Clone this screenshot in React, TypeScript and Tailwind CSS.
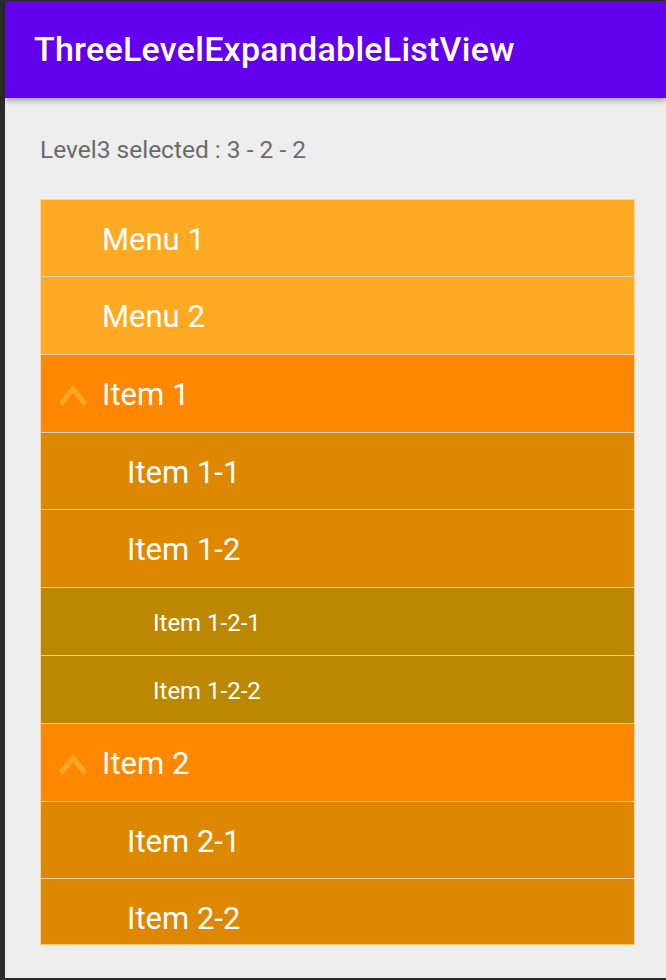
import { FC } from 'react';

type Row = {
  label: string;
  level: 0 | 1 | 2;
  kind?: 'menu' | 'group';
  expanded?: boolean;
  tall?: boolean;
};

const ROWS: Row[] = [
  { label: 'Menu 1', level: 0, kind: 'menu' },
  { label: 'Menu 2', level: 0, kind: 'menu', tall: true },
  { label: 'Item 1', level: 0, kind: 'group', expanded: true, tall: true },
  { label: 'Item 1-1', level: 1 },
  { label: 'Item 1-2', level: 1, tall: true },
  { label: 'Item 1-2-1', level: 2 },
  { label: 'Item 1-2-2', level: 2 },
  { label: 'Item 2', level: 0, kind: 'group', expanded: true, tall: true },
  { label: 'Item 2-1', level: 1 },
  { label: 'Item 2-2', level: 1, tall: true },
];

// expand indicator on the group rows
const Chevron: FC = () => (
  <svg width="30" height="26" viewBox="0 0 30 26" className="shrink-0">
    <path
      d="M2 23 L14 8 L26 23"
      fill="none"
      stroke="#FFA726"
      strokeWidth="5"
    />
  </svg>
);

const ListRow: FC<{ row: Row }> = ({ row }) => {
  const height = row.tall ? 'h-[78px]' : 'h-[77px]';

  if (row.level === 2) {
    return (
      <div className="flex h-[68px] shrink-0 items-center border-b border-[#d8d0bc] bg-[#bb8800] pl-[112px] pt-[2px] text-[24px] text-white">
        {row.label}
      </div>
    );
  }

  if (row.level === 1) {
    return (
      <div
        className={`flex ${height} shrink-0 items-center border-b border-[#d8d0bc] bg-[#dd8800] pl-[86px] pt-[4px] text-[31px] text-white`}
      >
        {row.label}
      </div>
    );
  }

  const bg = row.kind === 'menu' ? 'bg-[#ffaa22]' : 'bg-[#ff8800]';

  return (
    <div
      className={`flex ${height} shrink-0 items-center border-b border-[#d8d0bc] ${bg} pt-[4px] text-[31px] text-white`}
    >
      <div className="flex w-[61px] justify-center pb-[4px] pl-[4px]">
        {row.kind === 'group' && row.expanded && <Chevron />}
      </div>
      <span>{row.label}</span>
    </div>
  );
};

const App: FC = () => {
  return (
    <div
      className="flex h-[980px] w-[666px] flex-col overflow-hidden bg-[#2b2b2b] pb-[2px] pl-[5px] pt-[1px]"
      style={{ fontFamily: 'Roboto, "Noto Sans", sans-serif' }}
    >
      {/* Toolbar */}
      <div className="relative z-10 flex h-[97px] shrink-0 items-center bg-[#6200ee] pl-[29px] shadow-[0_3px_5px_rgba(0,0,0,0.3)]">
        <h1 className="text-[34px] font-medium tracking-[0.25px] text-white">
          ThreeLevelExpandableListView
        </h1>
      </div>

      {/* Content */}
      <div className="flex flex-1 flex-col bg-[#eeeeee] pl-[35px]">
        <p className="mt-[38px] text-[24.5px] leading-[28px] text-[#6b6b6b]">
          Level3 selected : 3 - 2 - 2
        </p>

        <div className="mt-[35px] flex h-[746px] w-[595px] flex-col overflow-hidden border border-[#f2d6a6] border-b-[#f7c870]">
          {ROWS.map((row) => (
            <ListRow key={row.label} row={row} />
          ))}
        </div>
      </div>
    </div>
  );
};

export default App;
